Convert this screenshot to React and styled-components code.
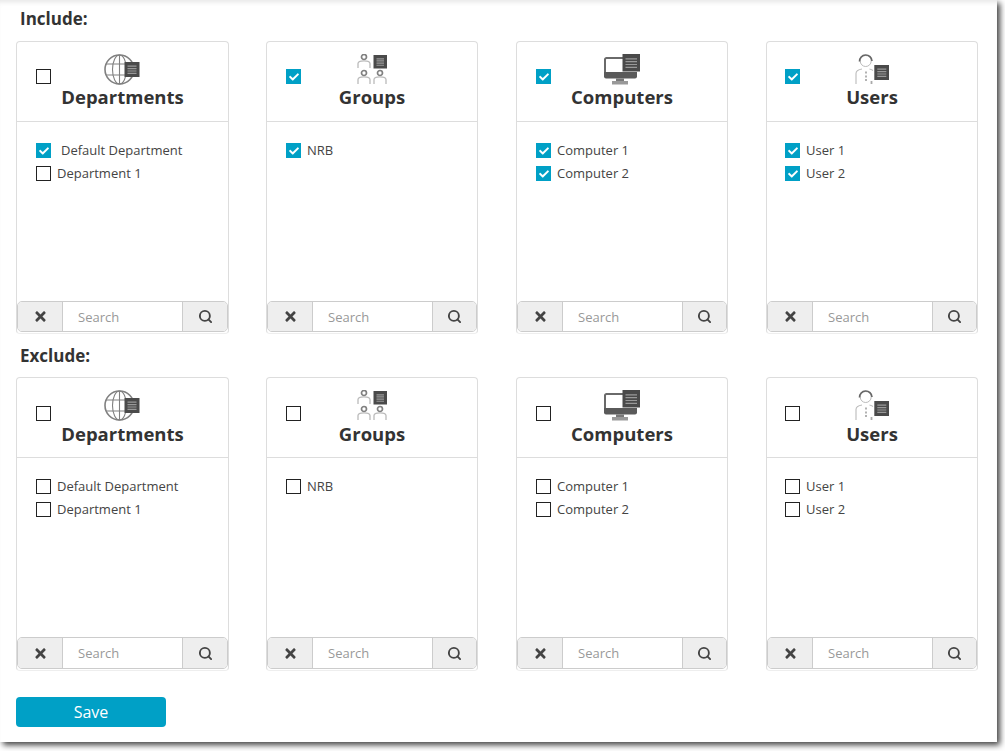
import { createGlobalStyle, styled } from 'styled-components';
import { FaCheck, FaTimes } from 'react-icons/fa';
import { Search } from 'lucide-react';

const GlobalStyle = createGlobalStyle`
  html, body {
    margin: 0;
    padding: 0;
    min-height: 751px;
    background: #fff;
    font-family: 'Open Sans', 'Liberation Sans', sans-serif;
    color: #333;
  }
`;

const BLUE = '#00a0c6';

const groups = [
  { title: 'Departments', icon: 'globe', items: ['Default Department', 'Department 1'] },
  { title: 'Groups', icon: 'group', items: ['NRB'] },
  { title: 'Computers', icon: 'computer', items: ['Computer 1', 'Computer 2'] },
  { title: 'Users', icon: 'user', items: ['User 1', 'User 2'], inset: 18 },
];

// what is ticked in the Include row
const included = {
  Departments: { all: false, items: ['Default Department'] },
  Groups: { all: true, items: ['NRB'] },
  Computers: { all: true, items: ['Computer 1', 'Computer 2'] },
  Users: { all: true, items: ['User 1', 'User 2'] },
};

function Sheet({ x = 0, y = 0, size = 15 }) {
  return (
    <g transform={`translate(${x} ${y})`}>
      <rect width={size} height={size} fill='#4a4a4a' />
      <path
        d={`M3 ${size * 0.28}H${size - 3}M3 ${size * 0.44}H${size - 3}M3 ${size * 0.6}H${size - 3}M3 ${size * 0.76}H${size - 3}`}
        stroke='#999'
        strokeWidth='1.2'
      />
    </g>
  );
}

function Person({ x = 0, y = 0 }) {
  return (
    <g transform={`translate(${x} ${y})`} fill='none'>
      <circle cx='6' cy='3' r='2.5' stroke='#808080' strokeWidth='1.7' />
      <path d='M0 14V9.5C0 7.5 3 6.8 6 6.8S12 7.5 12 9.5V14' stroke='#bbb' strokeWidth='1.3' />
    </g>
  );
}

function GroupIcon({ kind }) {
  if (kind === 'globe') {
    return (
      <svg width='36' height='32' viewBox='0 0 36 32'>
        <g fill='none' stroke='#808080' strokeWidth='1.1'>
          <circle cx='15.5' cy='15.5' r='14.5' strokeWidth='1.6' />
          <ellipse cx='15.5' cy='15.5' rx='7' ry='14.5' />
          <path d='M15.5 1V30M2 10H29M2 21H29' />
        </g>
        <Sheet x={20.5} y={8} size={15} />
      </svg>
    );
  }
  if (kind === 'group') {
    return (
      <svg width='30' height='32' viewBox='0 0 30 32'>
        <Person x={1} y={0} />
        <Sheet x={16.5} y={1} size={13.5} />
        <Person x={1} y={16} />
        <Person x={17} y={16} />
      </svg>
    );
  }
  if (kind === 'computer') {
    return (
      <svg width='36' height='32' viewBox='0 0 36 32'>
        <path d='M20 4H2.5A1.5 1.5 0 0 0 1 5.5V20M32 18V20' fill='none' stroke='#6a6a6a' strokeWidth='2' />
        <path d='M0 18H33V22.5A2 2 0 0 1 31 24.5H2A2 2 0 0 1 0 22.5Z' fill='#5a5a5a' />
        <path d='M12 24.5H20V27H12Z' fill='#777' />
        <path d='M8 27H24V30.5H8Z' fill='#999' />
        <Sheet x={18.5} y={0} size={17.5} />
      </svg>
    );
  }
  return (
    <svg width='34' height='32' viewBox='0 0 34 32'>
      <g fill='none'>
        <circle cx='10.7' cy='7' r='5.5' stroke='#bbb' strokeWidth='1' />
        <path d='M4.5 7.5A6.2 6.2 0 0 1 17 7' stroke='#666' strokeWidth='1.6' />
        <path d='M1 30V19.5C1 16.5 3.5 15.5 7 15M14.5 15C16 15.3 17 15.7 18 16.5' stroke='#bbb' strokeWidth='1.1' />
      </g>
      <path d='M11 17.5V19.5M11 21.5V23.5M11 25V27M16.5 27V30' stroke='#aaa' strokeWidth='1.8' />
      <Sheet x={19.3} y={11} size={15} />
    </svg>
  );
}

function Checkbox({ checked }) {
  return <Box $checked={checked}>{checked && <FaCheck />}</Box>;
}

function GroupCard({ group, state, lower }) {
  return (
    <Card $lower={lower}>
      <CardHeader $inset={group.inset} $lower={lower}>
        <Checkbox checked={state?.all} />
        <Heading>
          <GroupIcon kind={group.icon} />
          <Title $lower={lower}>{group.title}</Title>
        </Heading>
      </CardHeader>
      <ItemList $inset={group.inset}>
        {group.items.map((item) => {
          const checked = state?.items.includes(item);
          return (
            <Item key={item}>
              <Checkbox checked={checked} />
              <ItemLabel $wide={checked && item === 'Default Department'}>{item}</ItemLabel>
            </Item>
          );
        })}
      </ItemList>
      <SearchBar $lower={lower}>
        <ClearButton>
          <FaTimes />
        </ClearButton>
        <SearchInput placeholder='Search' />
        <SearchButton>
          <Search size={15} strokeWidth={3} />
        </SearchButton>
      </SearchBar>
    </Card>
  );
}

export default function App() {
  return (
    <>
      <GlobalStyle />
      <Page>
        <SectionLabel>Include:</SectionLabel>
        <CardRow>
          {groups.map((group) => (
            <GroupCard key={group.title} group={group} state={included[group.title]} />
          ))}
        </CardRow>
        <SectionLabel $second>Exclude:</SectionLabel>
        <CardRow>
          {groups.map((group) => (
            <GroupCard key={group.title} group={group} lower />
          ))}
        </CardRow>
        <SaveButton>Save</SaveButton>
      </Page>
    </>
  );
}

const Page = styled.div`
  width: 997px;
  height: 742px;
  box-sizing: border-box;
  padding: 10px 0 0 16px;
  background: #fff;
  box-shadow: 3px 3px 6px rgba(0, 0, 0, 0.75), inset 0 5px 5px -3px rgba(0, 0, 0, 0.1);
`;

const SectionLabel = styled.h2`
  margin: ${(p) => (p.$second ? '13px' : '0')} 0 0 4px;
  height: ${(p) => (p.$second ? '30px' : '31px')};
  line-height: 18px;
  font-size: 17px;
  font-weight: 700;
  color: #333;
`;

// the first card is a pixel wider than the others, the pitch stays 250px
const CardRow = styled.div`
  display: grid;
  grid-template-columns: repeat(3, 250px) 212px;
  & > :not(:last-child) {
    margin-right: 38px;
  }
  & > :first-child {
    margin-right: 37px;
  }
`;

const Card = styled.section`
  height: ${(p) => (p.$lower ? '294px' : '293px')};
  box-sizing: border-box;
  display: flex;
  flex-direction: column;
  border: 1px solid #ddd;
  border-bottom-color: #eee;
  border-radius: 4px;
  background: #fff;
`;

const CardHeader = styled.header`
  height: 80px;
  flex: none;
  box-sizing: border-box;
  display: grid;
  grid-template-columns: 1fr auto 1fr;
  align-items: start;
  padding: 12px ${(p) => p.$inset ?? 19}px 0;
  border-bottom: 1px solid #ddd;
  & > span {
    margin-top: ${(p) => (p.$lower ? '16px' : '15px')};
  }
`;

const Heading = styled.div`
  display: flex;
  flex-direction: column;
  align-items: center;
  svg {
    display: block;
  }
`;

const Title = styled.h3`
  margin: ${(p) => (p.$lower ? '0' : '-1px 0 0')};
  font-size: 18.5px;
  line-height: 24px;
  font-weight: 700;
  color: #333;
`;

const Box = styled.span`
  width: 15px;
  height: 15px;
  flex: none;
  box-sizing: border-box;
  display: flex;
  align-items: center;
  justify-content: center;
  border: ${(p) => (p.$checked ? 'none' : '1px solid #222')};
  background: ${(p) => (p.$checked ? BLUE : '#fff')};
  color: #fff;
  font-size: 10px;
`;

const ItemList = styled.ul`
  flex: 1;
  list-style: none;
  margin: 0;
  padding: 17px ${(p) => p.$inset ?? 19}px 0;
`;

const Item = styled.li`
  height: 23px;
  display: flex;
  align-items: center;
`;

const ItemLabel = styled.span`
  margin-left: ${(p) => (p.$wide ? '10px' : '6px')};
  margin-bottom: 2px;
  font-size: 13px;
  color: #444;
`;

const SearchBar = styled.div`
  height: ${(p) => (p.$lower ? '32px' : '31px')};
  flex: none;
  display: flex;
  box-sizing: border-box;
  margin-bottom: 1px;
  border: 1px solid #ccc;
  border-radius: 5px;
  overflow: hidden;
`;

const ClearButton = styled.button`
  width: 44px;
  flex: none;
  display: flex;
  align-items: center;
  justify-content: center;
  padding: 0;
  border: none;
  background: #eee;
  color: #444;
  font-size: 15px;
`;

const SearchButton = styled(ClearButton)`
  flex: 1;
`;

const SearchInput = styled.input`
  width: 121px;
  flex: none;
  box-sizing: border-box;
  padding: 0 15px;
  border: none;
  border-left: 1px solid #ccc;
  border-right: 1px solid #ccc;
  font: 13px 'Open Sans', 'Liberation Sans', sans-serif;
  &::placeholder {
    color: #999;
    opacity: 1;
  }
`;

const SaveButton = styled.button`
  display: block;
  width: 150px;
  height: 30px;
  margin-top: 26px;
  border: none;
  border-radius: 4px;
  background: ${BLUE};
  color: #fff;
  font: 16px 'Open Sans', 'Liberation Sans', sans-serif;
`;
